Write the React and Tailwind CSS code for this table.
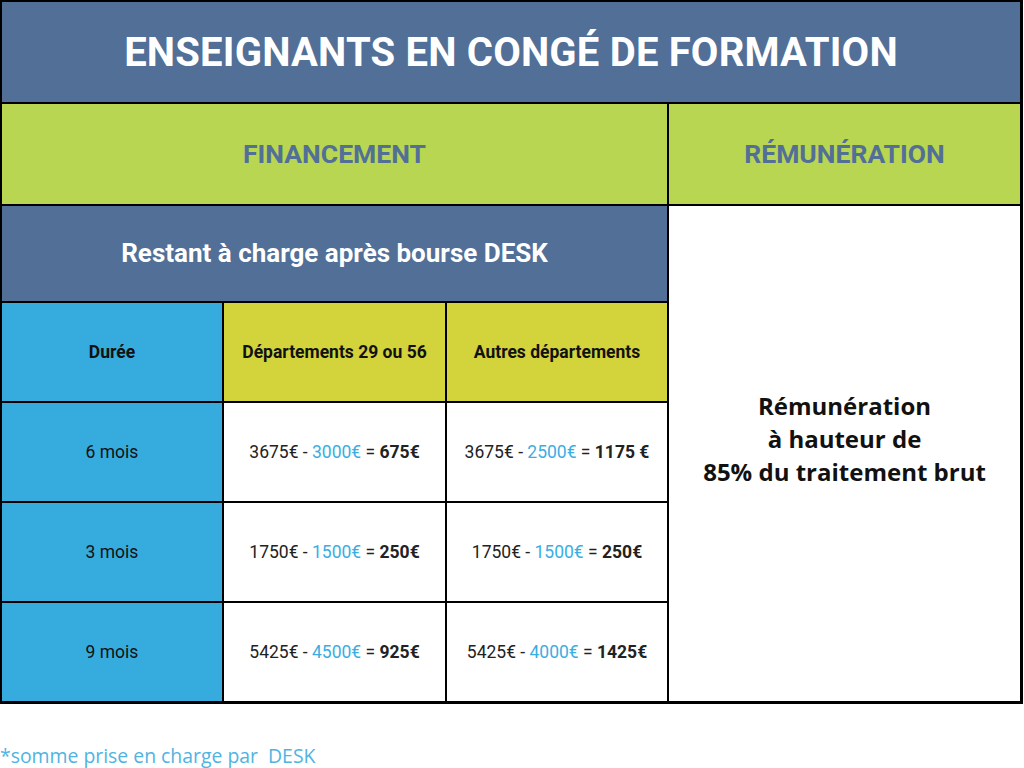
export default function App() {
  const rows = [
    { d: "6 mois", a: ["3675€", "3000€", "675€"], b: ["3675€", "2500€", "1175 €"] },
    { d: "3 mois", a: ["1750€", "1500€", "250€"], b: ["1750€", "1500€", "250€"] },
    { d: "9 mois", a: ["5425€", "4500€", "925€"], b: ["5425€", "4000€", "1425€"] },
  ];
  const Calc = ({ v }) => (
    <span>
      {v[0]} - <span className="text-[#3aaee2]">{v[1]}</span> = <span className="font-bold">{v[2]}</span>
    </span>
  );
  return (
    <div className="w-[1024px] h-[768px] bg-white font-['Roboto',sans-serif]">
      <div className="w-[1023px] bg-black pt-[2px] pl-[2px] pr-[3px] pb-[3px] flex flex-col gap-[2px]">
        <div className="h-[100px] bg-[#516f97] flex items-center justify-center pt-[2px]">
          <span className="text-white font-bold text-[40px] tracking-[0.2px]">ENSEIGNANTS EN CONGÉ DE FORMATION</span>
        </div>
        <div className="flex gap-[2px] h-[100px]">
          <div className="w-[665px] bg-[#b8d651] flex items-center justify-center">
            <span className="text-[#526f97] font-bold text-[26.5px]">FINANCEMENT</span>
          </div>
          <div className="flex-1 bg-[#b8d651] flex items-center justify-center">
            <span className="text-[#526f97] font-bold text-[26.5px]">RÉMUNÉRATION</span>
          </div>
        </div>
        <div className="flex gap-[2px]">
          <div className="w-[665px] flex flex-col gap-[2px]">
            <div className="h-[95px] bg-[#516f97] flex items-center justify-center">
              <span className="text-white font-bold text-[26px]">Restant à charge après bourse DESK</span>
            </div>
            <div className="grid grid-cols-[220px_221px_220px] gap-[2px]">
              <div className="h-[98px] bg-[#36acde] flex items-center justify-center text-[17.5px] font-bold text-[#111]">Durée</div>
              <div className="h-[98px] bg-[#d3d33c] flex items-center justify-center text-[17.5px] font-bold text-[#111]">Départements 29 ou 56</div>
              <div className="h-[98px] bg-[#d3d33c] flex items-center justify-center text-[17.5px] font-bold text-[#111]">Autres départements</div>
              {rows.map((r) => [
                <div key={r.d + "d"} className="h-[98px] bg-[#36acde] flex items-center justify-center text-[17.5px] text-[#111]">{r.d}</div>,
                <div key={r.d + "a"} className="h-[98px] bg-white flex items-center justify-center text-[17.5px] text-[#222]"><Calc v={r.a} /></div>,
                <div key={r.d + "b"} className="h-[98px] bg-white flex items-center justify-center text-[17.5px] text-[#222]"><Calc v={r.b} /></div>,
              ])}
            </div>
          </div>
          <div className="flex-1 bg-white flex items-center justify-center">
            <div className="text-center font-['Open_Sans',sans-serif] font-bold text-[24px] leading-[33px] text-[#111] mb-[30px]">
              Rémunération<br />à hauteur de<br />85% du traitement brut
            </div>
          </div>
        </div>
      </div>
      <div className="mt-[38px] font-['Open_Sans',sans-serif] text-[19.4px] text-[#4fb4e2] leading-[28px] whitespace-pre">*somme prise en charge par  DESK</div>
    </div>
  );
}
